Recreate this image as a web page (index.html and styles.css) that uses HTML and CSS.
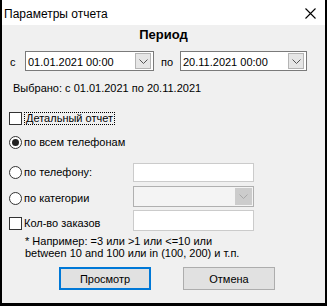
FILE: index.html
```html
<!DOCTYPE html>
<html>
<head>
<meta charset="utf-8">
<link rel="stylesheet" href="styles.css">
</head>
<body>
<div class="window">
  <div class="titlebar">
    <span class="title">Параметры отчета</span>
    <svg class="close" width="11" height="11" viewBox="0 0 11 11"><path d="M0.5 0.5 L10.5 10.5 M10.5 0.5 L0.5 10.5" stroke="#000" stroke-width="1.1" fill="none"/></svg>
  </div>
  <div class="content">
    <div class="heading">Период</div>
    <div class="daterow">
      <span class="lbl-from">с</span>
      <div class="datebox w1"><span class="dtext">01.01.2021 00:00</span><span class="ddbtn"><svg width="9" height="5" viewBox="0 0 9 5"><path d="M0.5 0.5 L4.5 4.5 L8.5 0.5" stroke="#555" fill="none"/></svg></span></div>
      <span class="lbl-to">по</span>
      <div class="datebox w2"><span class="dtext">20.11.2021 00:00</span><span class="ddbtn"><svg width="9" height="5" viewBox="0 0 9 5"><path d="M0.5 0.5 L4.5 4.5 L8.5 0.5" stroke="#555" fill="none"/></svg></span></div>
    </div>
    <div class="selected">Выбрано: с 01.01.2021 по 20.11.2021</div>
    <div class="row r-detail"><span class="check"></span><span class="focus">Детальный отчет</span></div>
    <div class="row r-all"><span class="radio on"><span class="dot"></span></span><span class="txt">по всем телефонам</span></div>
    <div class="row r-phone"><span class="opt"><span class="radio"></span><span class="txt">по телефону:</span></span><span class="input"></span></div>
    <div class="row r-cat"><span class="opt"><span class="radio"></span><span class="txt">по категории</span></span><span class="combo"><span class="cbtn"><svg width="9" height="5" viewBox="0 0 9 5"><path d="M0.5 0.5 L4.5 4.5 L8.5 0.5" stroke="#a8a8a8" fill="none"/></svg></span></span></div>
    <div class="row r-qty"><span class="opt"><span class="check"></span><span class="txt">Кол-во заказов</span></span><span class="input tall"></span></div>
    <div class="hint"><div class="hint1">* Например: =3 или &gt;1 или &lt;=10 или</div><div class="hint2">between 10 and 100 или in (100, 200) и т.п.</div></div>
    <div class="buttons">
      <span class="btn default">Просмотр</span>
      <span class="btn">Отмена</span>
    </div>
  </div>
</div>
</body>
</html>
```
FILE: styles.css
```css
html, body {
  margin: 0;
  padding: 0;
  background: #000;
  width: 327px;
  height: 306px;
  overflow: hidden;
}
body {
  font-family: "Liberation Sans", Arial, sans-serif;
  font-size: 11px;
  color: #000;
}
.window {
  margin-left: 2px;
  width: 323px;
  height: 303px;
  background: #f0f0f0;
  display: flex;
  flex-direction: column;
}
.titlebar {
  height: 25px;
  background: #fff;
  display: flex;
  align-items: center;
  justify-content: space-between;
  padding: 0 9px 0 2px;
}
.title {
  font-size: 12px;
  padding-top: 2px;
}
.close {
  margin-top: 2px;
}
.content {
  display: flex;
  flex-direction: column;
  padding: 0 0 0 7px;
}
.heading {
  margin-top: 2px;
  height: 16px;
  line-height: 16px;
  font-size: 13px;
  font-weight: bold;
  text-align: center;
  padding-right: 7px;
}
.daterow {
  margin-top: 8px;
  height: 20px;
  display: flex;
  align-items: center;
}
.lbl-from {
  width: 15px;
  padding-left: 1px;
  padding-top: 2px;
}
.lbl-to {
  width: 26px;
  padding-left: 7px;
  box-sizing: border-box;
  padding-top: 2px;
}
.datebox {
  height: 20px;
  box-sizing: border-box;
  border: 1px solid #7a7a7a;
  background: #fff;
  display: flex;
  align-items: center;
  justify-content: space-between;
  padding: 0 1px 0 2px;
}
.w1 { width: 129px; }
.w2 { width: 127px; }
.dtext {
  padding-top: 1px;
}
.ddbtn {
  width: 16px;
  height: 16px;
  box-sizing: border-box;
  border: 1px solid #b4b4b4;
  background: #e6e6e6;
  display: flex;
  align-items: center;
  justify-content: center;
  margin-right: 1px;
}
.selected {
  margin-top: 11px;
  height: 13px;
  line-height: 13px;
  padding-left: 4px;
}
.row {
  display: flex;
  align-items: center;
}
.opt {
  display: flex;
  align-items: center;
  width: 124px;
}
.check {
  width: 13px;
  height: 13px;
  box-sizing: border-box;
  border: 1px solid #333;
  background: #fff;
  flex: none;
}
.radio {
  width: 13px;
  height: 13px;
  box-sizing: border-box;
  border: 1px solid #333;
  border-radius: 50%;
  background: #fff;
  flex: none;
  display: flex;
  align-items: center;
  justify-content: center;
}
.dot {
  width: 7px;
  height: 7px;
  border-radius: 50%;
  background: #222;
}
.txt {
  margin-left: 2px;
  line-height: 13px;
}
.focus {
  margin-left: 2px;
  padding: 0 1px 0 1px;
  border: 1px dotted #000;
  line-height: 11px;
  height: 11px;
  box-sizing: content-box;
}
.r-detail {
  margin-top: 17px;
  height: 13px;
}
.r-all {
  margin-top: 11px;
  height: 13px;
}
.r-phone {
  margin-top: 14px;
  height: 19px;
}
.r-cat {
  margin-top: 4px;
  height: 21px;
}
.r-cat .opt { margin-top: 4px; }
.r-qty {
  margin-top: 3px;
  height: 21px;
}
.r-qty .opt { margin-top: 5px; }
.input {
  width: 121px;
  height: 19px;
  box-sizing: border-box;
  border: 1px solid #cbcbcb;
  background: #fff;
}
.input.tall {
  height: 21px;
}
.combo {
  width: 121px;
  height: 21px;
  box-sizing: border-box;
  border: 1px solid #b0b0b0;
  background: #f4f4f4;
  display: flex;
  justify-content: flex-end;
  align-items: center;
  padding-right: 1px;
}
.cbtn {
  width: 17px;
  height: 17px;
  background: #cccccc;
  display: flex;
  align-items: center;
  justify-content: center;
}
.hint {
  margin-top: 4px;
  padding-left: 16px;
  font-size: 11px;
  line-height: 12px;
}
.buttons {
  margin-top: 8px;
  display: flex;
  padding-left: 50px;
  gap: 32px;
}
.btn {
  width: 92px;
  height: 23px;
  box-sizing: border-box;
  border: 1px solid #adadad;
  background: #e1e1e1;
  display: flex;
  align-items: center;
  justify-content: center;
  padding-top: 1px;
}
.btn.default {
  border: 2px solid #0078d7;
}
```
